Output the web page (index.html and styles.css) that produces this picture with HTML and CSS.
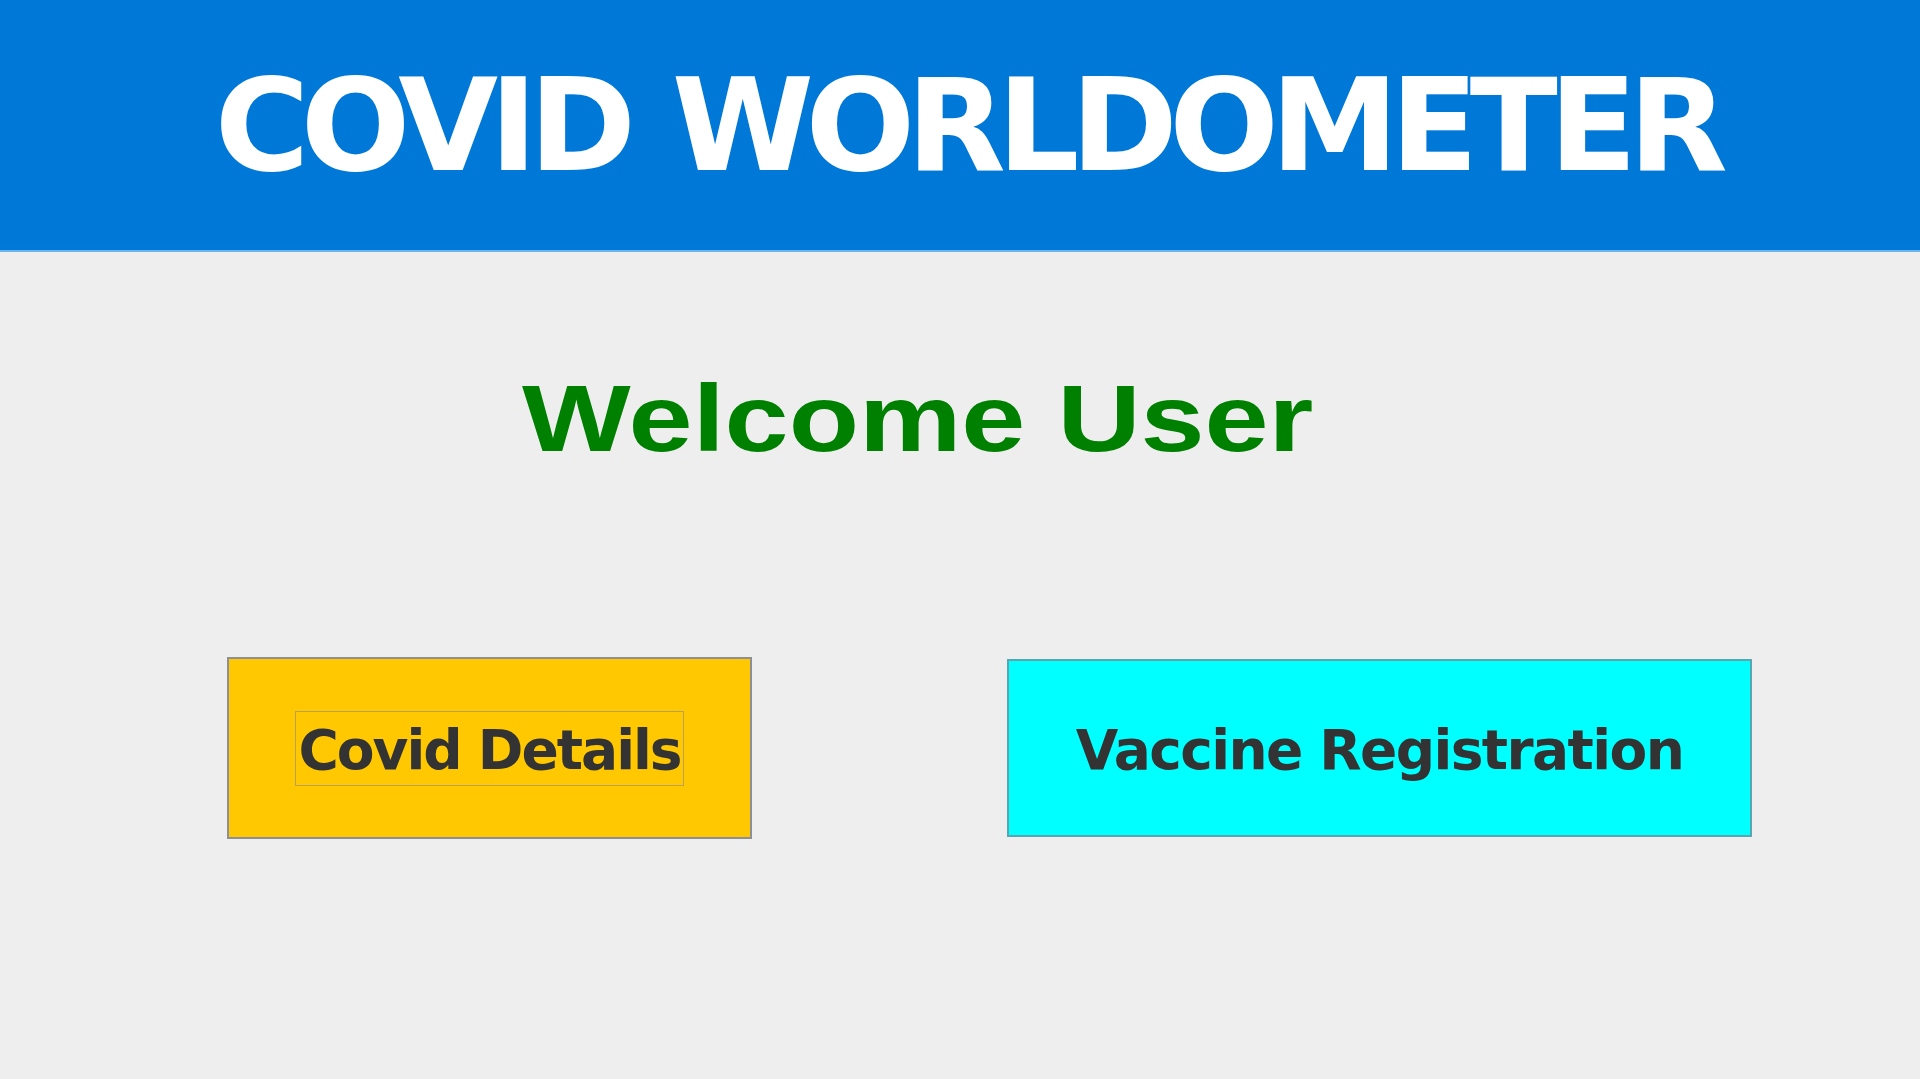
FILE: index.html
```html
<!DOCTYPE html>
<html lang="en">
<head>
<meta charset="utf-8">
<title>COVID WORLDOMETER</title>
<link rel="stylesheet" href="styles.css">
</head>
<body>
<header class="banner">
  <h1 class="banner-title">COVID WORLDOMETER</h1>
</header>
<main class="content">
  <h2 class="welcome">Welcome User</h2>
  <div class="actions">
    <button class="btn btn-covid"><span class="focus">Covid Details</span></button>
    <button class="btn btn-vaccine"><span class="label">Vaccine Registration</span></button>
  </div>
</main>
</body>
</html>
```
FILE: styles.css
```css
html, body {
  margin: 0;
  padding: 0;
  background: #eeeeee;
  height: 100%;
}
body {
  font-family: "DejaVu Sans", Verdana, sans-serif;
}
.banner {
  height: 250px;
  background: #0078d7;
  border-bottom: 2px solid #6cb4ec;
  display: flex;
  align-items: center;
  justify-content: center;
}
.banner-title {
  margin: 0;
  padding-left: 14px;
  font-family: "DejaVu Sans", Verdana, sans-serif;
  font-weight: bold;
  font-size: 129px;
  line-height: 1;
  color: #ffffff;
  letter-spacing: -8.6px;
  word-spacing: 8px;
}
.content {
  display: flex;
  flex-direction: column;
}
.welcome {
  align-self: flex-start;
  margin: 119px 0 0 522px;
  font-family: "Liberation Sans", Arial, sans-serif;
  font-weight: bold;
  font-size: 95px;
  line-height: 1;
  color: #008000;
  transform: scaleX(1.212);
  transform-origin: left center;
}
.actions {
  display: flex;
  align-items: center;
  margin-top: 191px;
  padding-left: 227px;
  gap: 255px;
}
.btn {
  display: flex;
  align-items: center;
  justify-content: center;
  padding: 0;
  margin: 0;
  border: 2px solid #8c9096;
  font-family: "DejaVu Sans", Verdana, sans-serif;
  font-weight: bold;
  font-size: 55px;
  color: #333333;
  letter-spacing: -2px;
}
.btn-covid {
  width: 525px;
  height: 182px;
  background: #ffc800;
}
.btn-vaccine {
  width: 745px;
  height: 178px;
  background: #00ffff;
  border-color: #5aa6b0;
  letter-spacing: -1.6px;
}
.focus {
  display: inline-block;
  border: 1px solid #b8a25a;
  padding: 3px 2px 0 2px;
  line-height: 70px;
}
.label {
  display: inline-block;
  padding-top: 4px;
  line-height: 70px;
}
```
